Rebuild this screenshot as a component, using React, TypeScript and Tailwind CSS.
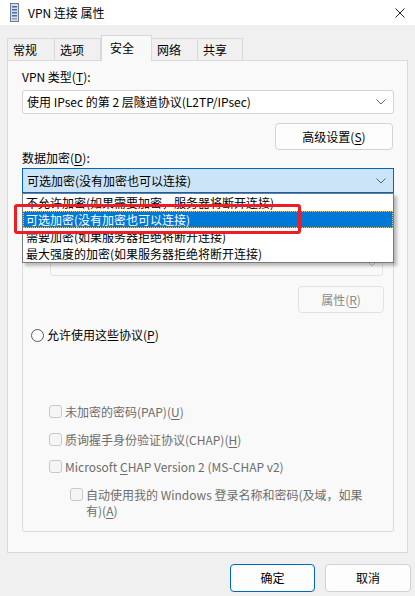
import type { ReactNode } from "react";

function Chevron({ color = "#606060" }: { color?: string }) {
	return (
		<svg width="10" height="6" viewBox="0 0 10 6" fill="none">
			<path d="M0.5 0.5 L5 5 L9.5 0.5" stroke={color} strokeWidth="1" />
		</svg>
	);
}

function Key({ children }: { children: ReactNode }) {
	return <span className="underline underline-offset-2">{children}</span>;
}

function Checkbox({ children, className = "" }: { children: ReactNode; className?: string }) {
	return (
		<div className={`flex items-start gap-[3px] text-[#6d6d6d] ${className}`}>
			<div className="mt-[1px] w-[13px] h-[13px] shrink-0 rounded-[3px] border border-[#c8c8c8] bg-[#f5f5f5]" />
			<div className="leading-[16px]">{children}</div>
		</div>
	);
}

const tabs = ["常规", "选项", "安全", "网络", "共享"];
const tabWidths = ["w-[48px]", "w-[47px]", "w-[51px]", "w-[47px]", "w-[46px]"];

const encryptOptions = [
	"不允许加密(如果需要加密，服务器将断开连接)",
	"可选加密(没有加密也可以连接)",
	"需要加密(如果服务器拒绝将断开连接)",
	"最大强度的加密(如果服务器拒绝将断开连接)",
];

export default function App() {
	return (
		<div className="w-[415px] h-[596px] bg-[#f0f0f0] text-[12px] text-black font-['Noto_Sans_CJK_SC',sans-serif] overflow-hidden">
			{/* title bar */}
			<div className="h-[25px] bg-white flex items-center pl-[10px] pr-[8px]">
				<svg width="9" height="19" viewBox="0 0 9 19" className="mr-[9px]">
					<rect x="0.5" y="0.5" width="8" height="18" fill="#d7dde6" stroke="#6e7d92" />
					<rect x="2" y="3" width="5" height="1.5" fill="#4a6fa5" />
					<rect x="2" y="6" width="5" height="1.5" fill="#4a6fa5" />
					<rect x="2" y="9" width="5" height="1.5" fill="#4a6fa5" />
					<rect x="2" y="12" width="5" height="1.5" fill="#4a6fa5" />
					<rect x="2" y="15" width="5" height="1.5" fill="#8aa0c0" />
				</svg>
				<span className="leading-[16px]">VPN 连接 属性</span>
				<svg width="10" height="10" viewBox="0 0 10 10" className="ml-auto mr-[2px]">
					<path d="M0.5 0.5 L9.5 9.5 M9.5 0.5 L0.5 9.5" stroke="#222" strokeWidth="1" />
				</svg>
			</div>

			<div className="pl-[7px] pr-[7px]">
				{/* tabs */}
				<div className="flex items-end mt-[10px] h-[25px]">
					{tabs.map((t, i) => {
						const active = i === 2;
						return (
							<div
								key={t}
								className={`${tabWidths[i]} flex items-center border border-b-0 border-[#d9d9d9] ${
									active
										? "h-[26px] bg-[#f9f9f9] relative z-10 -mb-px pl-[8px] pb-[2px]"
										: "h-[22px] bg-[#f0f0f0] pl-[5px] -ml-px first:ml-0"
								}`}
							>
								{t}
							</div>
						);
					})}
				</div>

				{/* panel */}
				<div className="relative w-[401px] h-[493px] border border-[#d9d9d9] bg-[#f9f9f9] pl-[14px] pr-[13px] pt-[8px]">
					<div className="leading-[16px]">
						VPN 类型(<Key>T</Key>):
					</div>
					<div className="mt-[5px] w-[372px] h-[24px] rounded-[3px] border border-[#d3d3d3] bg-white flex items-center pl-[4px] pr-[7px]">
						<span className="leading-[16px]">使用 IPsec 的第 2 层隧道协议(L2TP/IPsec)</span>
						<span className="ml-auto">
							<Chevron />
						</span>
					</div>

					<div className="flex justify-end mt-[9px] pr-[1px]">
						<div className="w-[118px] h-[27px] rounded-[4px] border border-[#d3d3d3] bg-[#fdfdfd] flex items-center justify-center">
							高级设置(<Key>S</Key>)
						</div>
					</div>

					<div className="leading-[16px]">
						数据加密(<Key>D</Key>):
					</div>

					<div className="relative mt-[2px] w-[372px]">
						<div className="h-[25px] border border-[#0067c0] bg-[#cce4f7] flex items-center pl-[4px] pr-[7px]">
							<span className="leading-[16px]">可选加密(没有加密也可以连接)</span>
							<span className="ml-auto">
								<Chevron />
							</span>
						</div>

						{/* open list */}
						<div className="absolute left-0 top-full z-20 w-[372px] border border-[#7a7a7a] bg-white shadow-[3px_3px_3px_rgba(0,0,0,0.25)]">
							{encryptOptions.map((o, i) => (
								<div
									key={o}
									className={`h-[17px] flex items-center pl-[3px] leading-[16px] ${
										i === 1 ? "bg-[#0078d7] text-white outline outline-1 outline-dotted outline-[#f0c870] -outline-offset-1" : ""
									}`}
								>
									{o}
								</div>
							))}
						</div>
					</div>

					{/* authentication group (top part sits under the open list) */}
					<div className="mt-[12px] w-[372px] h-[327px] border border-[#dcdcdc] rounded-[2px] pl-[8px] pr-[9px] pt-[18px]">
						<div className="flex items-center gap-[3px] h-[16px]">
							<div className="w-[13px] h-[13px] rounded-full border border-[#5a5a5a] bg-white" />
						</div>
						<div className="ml-[19px] mt-[12px] w-[333px] h-[24px] rounded-[3px] border border-[#e2e2e2] bg-[#f9f9f9] flex items-center justify-end pr-[5px]">
							<Chevron color="#c0c0c0" />
						</div>
						<div className="flex justify-end mt-[10px]">
							<div className="w-[86px] h-[27px] rounded-[4px] border border-[#e2e2e2] bg-[#f9f9f9] flex items-center justify-center text-[#8a8a8a]">
								属性(<Key>R</Key>)
							</div>
						</div>

						<div className="flex items-center gap-[3px] mt-[14px]">
							<div className="w-[13px] h-[13px] rounded-full border border-[#5a5a5a] bg-[#fdfdfd]" />
							<span className="leading-[16px]">
								允许使用这些协议(<Key>P</Key>)
							</span>
						</div>

						<div className="pl-[18px]">
							<Checkbox className="mt-[61px]">
								未加密的密码(PAP)(<Key>U</Key>)
							</Checkbox>
							<Checkbox className="mt-[12px]">
								质询握手身份验证协议(CHAP)(<Key>H</Key>)
							</Checkbox>
							<Checkbox className="mt-[11px]">
								Microsoft <Key>C</Key>HAP Version 2 (MS-CHAP v2)
							</Checkbox>
							<Checkbox className="mt-[12px] ml-[21px]">
								自动使用我的 Windows 登录名称和密码(及域，如果
								<br />
								有)(<Key>A</Key>)
							</Checkbox>
						</div>
					</div>

					{/* highlight box */}
					<div className="absolute left-[6px] top-[143px] w-[287px] h-[30px] rounded-[3px] border-[3px] border-[#ee1c24] z-30" />
				</div>

				{/* footer buttons */}
				<div className="flex justify-end gap-[10px] mt-[11px] mr-[-3px]">
					<div className="w-[85px] h-[28px] rounded-[4px] border border-[#0067c0] bg-[#fdfdfd] flex items-center justify-center">
						确定
					</div>
					<div className="w-[86px] h-[28px] rounded-[4px] border border-[#d0d0d0] bg-[#fdfdfd] flex items-center justify-center">
						取消
					</div>
				</div>
			</div>
		</div>
	);
}
